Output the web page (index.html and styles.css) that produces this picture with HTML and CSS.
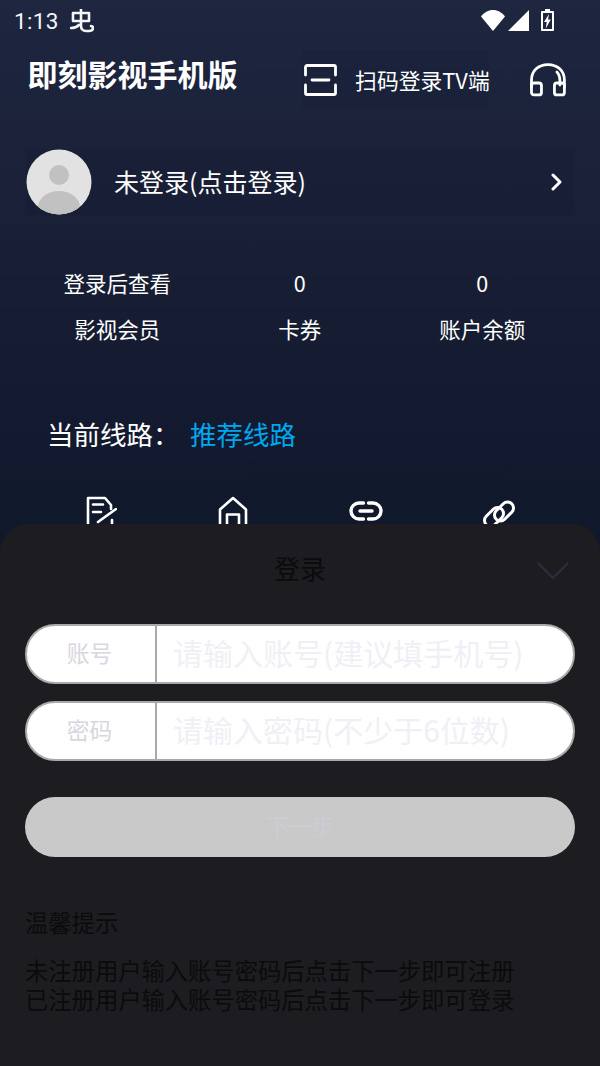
FILE: index.html
```html
<!DOCTYPE html>
<html lang="zh-CN">
<head>
<meta charset="utf-8">
<title>即刻影视手机版</title>
<link rel="stylesheet" href="styles.css">
</head>
<body>
<div class="screen">
  <div class="status">
    <span class="time">1:13</span>
    <svg class="bug" viewBox="0 0 24 24" fill="none" stroke="#f4f5f7" stroke-width="2.6" stroke-linecap="round" stroke-linejoin="round"><rect x="3" y="4" width="16" height="8"/><path d="M11 0v17c0 3 2 5 5 5h3c3 0 4-1 4-3 0-1.500-1-2-2-2"/><path d="M1 19c3 0 6-1 8-3"/></svg>
    <span class="status-icons">
      <svg class="wifi" viewBox="0 0 24 21"><path d="M0 6.500C3 2.500 7.300 0 12 0s9 2.500 12 6.500L12 21z" fill="#fff"/></svg>
      <svg class="signal" viewBox="0 0 21 21"><path d="M21 0v21H0z" fill="#fff"/></svg>
      <svg class="battery" viewBox="0 0 13 22"><path d="M4 0h5v2h3a1 1 0 0 1 1 1v18a1 1 0 0 1-1 1H1a1 1 0 0 1-1-1V3a1 1 0 0 1 1-1h3z" fill="#fff"/><rect x="2" y="4" width="9" height="16" fill="#1e2540"/><path d="M8 5 3 13h2.700l-.9 6.500 5-9H7z" fill="#fff"/></svg>
    </span>
  </div>

  <header class="header">
    <h1 class="title">即刻影视手机版</h1>
    <div class="scan">
      <svg class="scan-icon" viewBox="0 0 33 32" fill="none" stroke="#fff" stroke-width="2.800" stroke-linecap="round" stroke-linejoin="round"><path d="M1.500 11V3a1.500 1.500 0 0 1 1.500-1.500h27A1.500 1.500 0 0 1 31.500 3v8"/><path d="M8 16h17"/><path d="M1.500 21v8A1.500 1.500 0 0 0 3 30.500h27a1.500 1.500 0 0 0 1.500-1.500v-8"/></svg>
      <span class="scan-text">扫码登录TV端</span>
    </div>
    <svg class="phones" viewBox="0 0 36 34" fill="none" stroke="#fff" stroke-width="2.800" stroke-linecap="round" stroke-linejoin="round"><path d="M1.500 24V17C1.500 7.500 8.500 1.500 18 1.500S34.500 7.500 34.500 17v7"/><path d="M27 9c2 2 3 5 3 9v4"/><rect x="1.500" y="20" width="10" height="12" rx="2.500"/><rect x="24.500" y="20" width="10" height="12" rx="2.500"/></svg>
  </header>

  <section class="profile">
    <svg class="avatar" viewBox="0 0 66 66"><defs><clipPath id="av"><circle cx="33" cy="33" r="32.500"/></clipPath></defs><circle cx="33" cy="33" r="32.500" fill="#e2e2e2"/><g clip-path="url(#av)" fill="#c1c1c1"><circle cx="33" cy="26" r="10"/><ellipse cx="33" cy="58" rx="21" ry="16"/></g></svg>
    <span class="name">未登录(点击登录)</span>
    <svg class="arrow" viewBox="0 0 12 18" fill="none" stroke="#fff" stroke-width="3" stroke-linecap="round" stroke-linejoin="round"><path d="M2 2l7 7-7 7"/></svg>
  </section>

  <section class="stats">
    <span>登录后查看</span><span>0</span><span>0</span>
    <span>影视会员</span><span>卡券</span><span>账户余额</span>
  </section>

  <section class="line">
    <div class="route"><span class="route-label">当前线路：</span><span class="route-value">推荐线路</span></div>
    <div class="tools">
      <svg class="tool" viewBox="0 0 34 34" fill="none" stroke="#fff" stroke-width="2.600" stroke-linejoin="round" stroke-linecap="round"><path d="M5 34V2h17l6 7v4"/><path d="M29 24v10"/><path d="M10 8.500h10M10 16h8"/><path d="M15 26l18-13"/></svg>
      <svg class="tool" viewBox="0 0 34 34" fill="none" stroke="#fff" stroke-width="2.600" stroke-linejoin="round"><path d="M4 34V13.500L17 2l13 11.500V34"/><path d="M11 34V18.500h12V34"/></svg>
      <svg class="tool" viewBox="0 0 34 34" fill="none" stroke="#fff" stroke-width="3.400" stroke-linecap="round"><path d="M14.500 7H10a8 8 0 0 0 0 16h4.500"/><path d="M19.500 7H24a8 8 0 0 1 0 16h-4.500"/><path d="M11 15h12"/></svg>
      <svg class="tool" viewBox="0 0 34 34" fill="none" stroke="#fff" stroke-width="3"><rect x="11" y="9.500" width="22" height="12" rx="6" transform="rotate(-45 22 15.500)"/><rect x="1" y="15" width="22" height="12" rx="6" transform="rotate(-45 12 21)"/></svg>
    </div>
  </section>

  <section class="sheet">
    <div class="sheet-head">
      <h2 class="sheet-title">登录</h2>
      <svg class="close" viewBox="0 0 32 18" fill="none" stroke="#2f2e3d" stroke-width="2"><path d="M1 1l15 15L31 1"/></svg>
    </div>
    <div class="field"><span class="field-label">账号</span><span class="field-input">请输入账号(建议填手机号)</span></div>
    <div class="field"><span class="field-label">密码</span><span class="field-input">请输入密码(不少于6位数)</span></div>
    <div class="next">下一步</div>
    <h3 class="tips-title">温馨提示</h3>
    <p class="tips">未注册用户输入账号密码后点击下一步即可注册<br>已注册用户输入账号密码后点击下一步即可登录</p>
  </section>
</div>
</body>
</html>
```

FILE: styles.css
```css
* { box-sizing: border-box; margin: 0; padding: 0; }
html, body { background: #141b2f; }
body { font-family: "Noto Sans CJK SC", "Noto Sans", sans-serif; }

.screen {
  position: relative;
  width: 600px;
  height: 1066px;
  overflow: hidden;
  color: #fff;
  background: linear-gradient(180deg, #1e2640 0, #1a2138 180px, #141b30 400px, #10182c 530px);
}

.status {
  display: flex;
  align-items: center;
  height: 42px;
  padding: 0 46px 0 14px;
}
.time { font: 400 22.500px/1 Roboto, sans-serif; color: #f4f5f7; letter-spacing: .3px; }
.bug { width: 24px; height: 24px; margin-left: 11px; }
.status-icons { display: flex; align-items: flex-start; margin-left: auto; height: 22px; margin-top: -2px; }
.wifi { width: 24px; height: 21px; margin-top: 1px; }
.signal { width: 21px; height: 21px; margin: 1px 0 0 3px; }
.battery { width: 13px; height: 22px; margin-left: 12px; }

.header {
  display: flex;
  align-items: center;
  height: 60px;
  margin-top: 8px;
  padding: 0 34px 0 27.500px;
}
.title { font-size: 30px; line-height: 48px; font-weight: 700; margin-top: -14px; width: 275.500px; white-space: nowrap; }
.scan {
  display: flex;
  align-items: center;
  height: 60px;
  width: 187px;
  padding-left: 2px;
  background: rgba(20, 25, 50, .18);
}
.scan-icon { width: 33px; height: 32px; flex: none; }
.scan-text { font-size: 21.800px; line-height: 32px; margin-left: 18px; white-space: nowrap; }
.phones { width: 36px; height: 34px; margin-left: 41px; }

.profile {
  display: flex;
  align-items: center;
  height: 66px;
  margin: 39px 26px 0;
  background: rgba(16, 20, 42, .14);
}
.avatar { width: 66px; height: 66px; flex: none; }
.name { font-size: 25px; line-height: 36px; margin: -2px 0 0 22px; }
.arrow { width: 12px; height: 18px; margin-left: auto; margin-right: 11px; }

.stats {
  display: grid;
  grid-template-columns: 182.500px 182.500px 182.500px;
  grid-auto-rows: 46px;
  justify-items: center;
  align-items: center;
  margin: 45px 26px 0;
  font-size: 21.500px;
  line-height: 30px;
}

.line { margin: 61px 28px 0; }
.route { display: flex; align-items: center; height: 40px; padding-left: 19px; font-size: 26.500px; }
.route-label { width: 143px; }
.route-value { color: #00a7ef; }
.tools {
  display: grid;
  grid-template-columns: repeat(4, 133px);
  justify-items: center;
  margin: 43px 0 0 5px;
}
.tool { width: 34px; height: 34px; }

.sheet {
  position: absolute;
  left: 0;
  top: 524px;
  width: 600px;
  height: 542px;
  padding: 0 25px;
  background: #1d1c20;
  border-radius: 28px 28px 0 0;
  color: #0b0b0d;
}
.sheet-head { position: relative; height: 100px; text-align: center; }
.sheet-title { font-size: 26px; font-weight: 400; line-height: 40px; padding-top: 24px; height: 100px; }
.close { position: absolute; right: 6px; top: 38px; width: 32px; height: 18px; }

.field {
  display: flex;
  align-items: stretch;
  height: 60px;
  margin-bottom: 17px;
  background: #fff;
  border: 2px solid #a9a9a9;
  border-radius: 30px;
  overflow: hidden;
}
.field-label {
  width: 130px;
  flex: none;
  padding-right: 3px;
  text-align: center;
  font-size: 22.800px;
  line-height: 54px;
  color: #d9d5e0;
  border-right: 2px solid #a9a9a9;
}
.field-input {
  padding-left: 16px;
  font-size: 30px;
  line-height: 52px;
  color: #f1eff5;
  white-space: nowrap;
}

.next {
  height: 60px;
  margin-top: 36px;
  background: #c9c9c9;
  border-radius: 30px;
  text-align: center;
  font-size: 22.500px;
  line-height: 57px;
  color: #cfcbd4;
}

.tips-title { font-size: 23.300px; font-weight: 400; line-height: 32px; margin-top: 49px; }
.tips { font-size: 23.300px; line-height: 29px; margin-top: 18px; white-space: nowrap; }
```
